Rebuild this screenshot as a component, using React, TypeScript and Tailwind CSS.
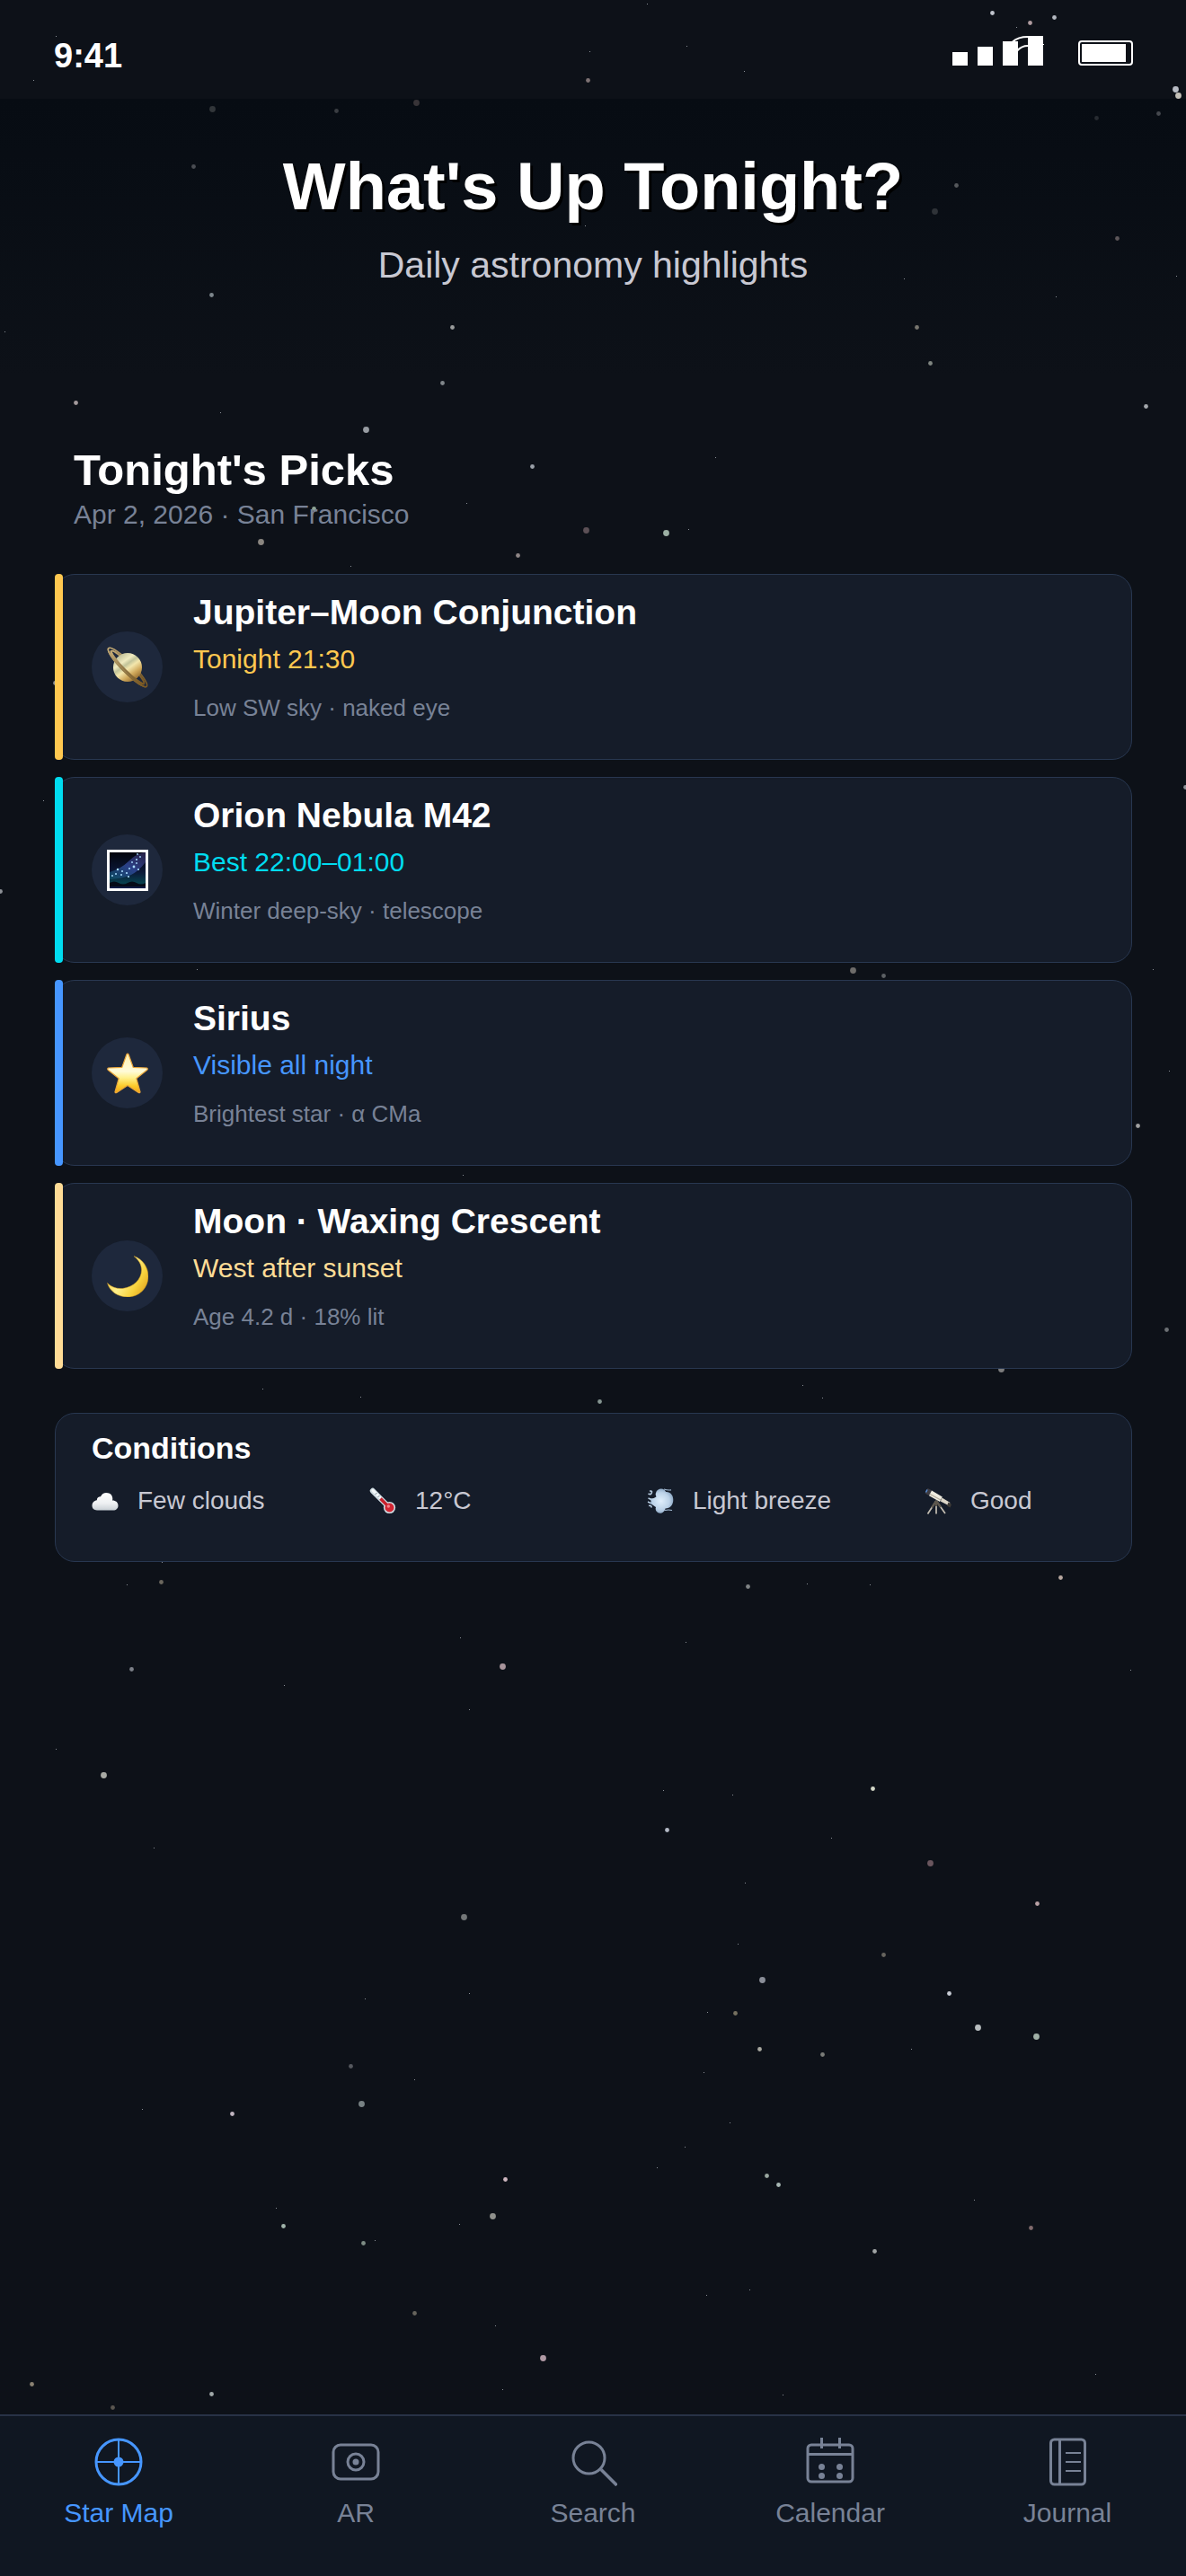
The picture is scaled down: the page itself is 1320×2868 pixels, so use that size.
import type { ReactNode } from "react";

type Star = [x: number, y: number, r: number, fill: string];

const BRIGHT_STARS: Star[] = [
  [1104, 14, 2, "#c0c4cc"], [1173, 19, 2, "#b4b8c0"], [1146, 25, 2, "#b09ca0"], [654, 89, 2, "#7e7274"],
  [1308, 99, 3, "#b8bcc4"], [1311, 106, 3, "#c4c0b8"], [236, 121, 3, "#32363a"], [374, 123, 2, "#3a3d42"],
  [463, 114, 3, "#383438"], [1289, 126, 2, "#45484e"], [1220, 131, 2, "#272b31"], [215, 185, 2, "#4a4d53"],
  [1064, 206, 2, "#55585c"], [1040, 235, 3, "#2f3338"], [1243, 265, 2, "#5c5659"], [235, 328, 2, "#7d868c"],
  [503, 364, 2, "#9a9c9c"], [1020, 364, 2, "#78766f"], [1035, 404, 2, "#7f8580"], [492, 426, 2, "#80868a"],
  [84, 448, 2, "#a39a9c"], [1275, 452, 2, "#a4a8ac"], [407, 478, 3, "#979ca2"], [592, 519, 2, "#9aa0a8"],
  [349, 566, 2, "#8fa496"], [652, 590, 3, "#5c5056"], [290, 603, 3, "#8a8680"], [576, 618, 2, "#8f8686"],
  [741, 593, 3, "#9cb0a4"], [61, 760, 2, "#8c9096"], [0, 992, 2, "#8c9096"], [1319, 876, 2, "#8c9096"],
  [949, 1080, 3, "#6e6c6a"], [983, 1086, 2, "#5c6064"], [1266, 1253, 2, "#a0a0a0"], [1298, 1480, 2, "#6c7074"],
  [1114, 1524, 3, "#7c7c7c"], [667, 1560, 2, "#849490"], [1180, 1756, 2, "#b8a8a0"], [179, 1761, 2, "#6b675e"],
  [832, 1766, 2, "#7f8385"], [559, 1855, 3, "#a8959c"], [146, 1858, 2, "#7c8088"], [115, 1976, 3, "#a8aaa4"],
  [971, 1991, 2, "#d4d8c8"], [742, 2037, 2, "#b4bac6"], [1035, 2074, 3, "#6a565e"], [1154, 2119, 2, "#b8a0a4"],
  [516, 2134, 3, "#737778"], [983, 2176, 2, "#66645e"], [848, 2204, 3, "#8a8e98"], [1056, 2219, 2, "#c8ccd4"],
  [818, 2241, 2, "#75705f"], [1088, 2257, 3, "#b8bec0"], [1153, 2267, 3, "#a0b0a6"], [845, 2281, 2, "#a8a8a0"],
  [915, 2287, 2, "#7a7c78"], [390, 2300, 2, "#55585e"], [402, 2342, 3, "#788284"], [258, 2353, 2, "#c0b4c0"],
  [562, 2426, 2, "#d0b8c0"], [853, 2422, 2, "#9aa8a0"], [866, 2432, 2, "#a8b8b4"], [548, 2467, 3, "#8f918c"],
  [315, 2478, 2, "#a0b4aa"], [1147, 2480, 2, "#806a6c"], [404, 2497, 2, "#7d8c84"], [973, 2506, 2, "#a0a4a4"],
  [461, 2575, 2, "#66645c"], [604, 2625, 3, "#b09aa4"], [35, 2654, 2, "#8a8272"], [235, 2665, 2, "#a0a8a8"],
  [125, 2680, 2, "#5a5650"],
];

const FAINT_STARS: [number, number][] = [
  [720, 4], [1131, 30], [62, 40], [764, 51], [656, 57], [828, 79], [37, 89], [651, 251], [1006, 310],
  [1309, 307], [1175, 330], [5, 369], [245, 459], [796, 509], [519, 560], [766, 589], [390, 630], [48, 891],
  [219, 1079], [515, 1308], [1301, 1192], [1283, 1079], [292, 1546], [401, 1555], [893, 1542], [915, 1556],
  [141, 1764], [180, 1739], [898, 1763], [968, 1764], [512, 1823], [763, 1828], [1258, 1859], [316, 1876],
  [522, 1903], [62, 1947], [738, 1993], [815, 1998], [925, 2046], [171, 2057], [829, 2096], [821, 2164],
  [406, 2225], [522, 2219], [787, 2240], [1014, 2281], [783, 2307], [461, 2315], [158, 2348], [812, 2363],
  [762, 2390], [731, 2413], [1084, 2449], [307, 2458], [511, 2476], [417, 2494], [834, 2549], [786, 2555],
  [551, 2589], [1219, 2643], [559, 2660], [871, 2666],
];

function StarField() {
  return (
    <svg
      aria-hidden="true"
      className="pointer-events-none absolute inset-0 h-full w-full"
      viewBox="0 0 1320 2868"
      preserveAspectRatio="xMidYMin slice"
    >
      {BRIGHT_STARS.map(([x, y, r, fill]) => (
        <circle key={`${x}-${y}`} cx={x + 0.5} cy={y + 0.5} r={r + 0.4} fill={fill} />
      ))}
      {FAINT_STARS.map(([x, y]) => (
        <rect key={`${x}-${y}`} x={x} y={y} width="1" height="1" fill="#8a8f96" />
      ))}
    </svg>
  );
}

function SignalAndBattery() {
  return (
    <svg width="201" height="33" viewBox="0 0 201 33" fill="none" role="img" aria-label="Signal and battery">
      <g fill="#fff">
        <rect x="0" y="18" width="17" height="15" />
        <rect x="28" y="12" width="17" height="21" />
        <rect x="56" y="6" width="17" height="27" />
        <rect x="84" y="0" width="17" height="33" />
        <rect x="101" y="9" width="1" height="1" />
        <rect x="144" y="9" width="49" height="20" />
      </g>
      <path d="M67 6.5Q73 1 84 1M72 16.500Q77 11 84 11" stroke="#fff" strokeWidth="2" />
      <rect x="141" y="6" width="59" height="26" rx="3" stroke="#fff" strokeWidth="2" />
    </svg>
  );
}

function PlanetIcon() {
  return (
    <svg width="46" height="46" viewBox="0 0 46 46" aria-hidden="true">
      <defs>
        <linearGradient id="planet" x1="0.2" y1="0.1" x2="0.8" y2="0.95">
          <stop offset="0" stopColor="#c3c19a" />
          <stop offset="0.25" stopColor="#f0ebc0" />
          <stop offset="0.38" stopColor="#c2c49a" />
          <stop offset="0.52" stopColor="#f3e6ac" />
          <stop offset="0.75" stopColor="#d0a95c" />
          <stop offset="1" stopColor="#8f672c" />
        </linearGradient>
        <linearGradient id="ring" x1="0" y1="0" x2="1" y2="0">
          <stop offset="0" stopColor="#c4ab76" />
          <stop offset="0.5" stopColor="#8e7443" />
          <stop offset="1" stopColor="#7a5822" />
        </linearGradient>
      </defs>
      <g transform="rotate(45 23 23)" fill="none" stroke="url(#ring)">
        <ellipse cx="23" cy="23" rx="30" ry="6" strokeWidth="1.600" />
        <ellipse cx="23" cy="23" rx="25.500" ry="4" strokeWidth="2" />
      </g>
      <circle cx="23" cy="23" r="16" fill="url(#planet)" />
      <g transform="rotate(45 23 23)" fill="none" stroke="url(#ring)">
        <path d="M-7 23A30 6 0 0 0 53 23" strokeWidth="1.600" />
        <path d="M-2.500 23A25.500 4 0 0 0 48.500 23" strokeWidth="2.400" />
      </g>
    </svg>
  );
}

function NebulaIcon() {
  return (
    <svg width="46" height="46" viewBox="0 0 46 46" aria-hidden="true">
      <defs>
        <linearGradient id="night" x1="0" y1="0" x2="0" y2="1">
          <stop offset="0" stopColor="#02040c" />
          <stop offset="0.55" stopColor="#0b1838" />
          <stop offset="0.85" stopColor="#07404e" />
          <stop offset="1" stopColor="#04101f" />
        </linearGradient>
        <linearGradient id="milky" x1="0" y1="1" x2="1" y2="0">
          <stop offset="0" stopColor="#12647c" stopOpacity="0.500" />
          <stop offset="0.5" stopColor="#3550a8" stopOpacity="0.750" />
          <stop offset="1" stopColor="#4a3a7a" stopOpacity="0.500" />
        </linearGradient>
      </defs>
      <rect x="0" y="0" width="46" height="46" fill="#fff" />
      <rect x="3" y="3" width="40" height="40" fill="url(#night)" />
      <path d="M3 25Q16 21 24 13T41 3H43V14Q35 24 27 28T3 33Z" fill="url(#milky)" />
      <path d="M3 37Q8 34 13 37T23 37T33 37T43 37V43H3Z" fill="#050b18" />
      <path d="M3 41H43V43H3Z" fill="#0c1b44" />
      <g fill="#a9dcff">
        <circle cx="12" cy="22" r="1.200" />
        <circle cx="17" cy="24" r="1" />
        <circle cx="22" cy="26" r="1.100" />
        <circle cx="25" cy="21" r="1" />
        <circle cx="30" cy="19" r="1.400" />
        <circle cx="35" cy="22" r="1.100" />
        <circle cx="28" cy="14" r="0.900" />
        <circle cx="33" cy="11" r="1" />
        <circle cx="37" cy="8" r="0.900" />
        <circle cx="34" cy="5" r="0.900" />
        <circle cx="10" cy="27" r="1" />
        <circle cx="16" cy="28" r="1" />
        <circle cx="24" cy="30" r="1.100" />
        <circle cx="6" cy="29" r="0.900" />
        <circle cx="33" cy="15" r="0.900" />
      </g>
    </svg>
  );
}

function StarIcon() {
  return (
    <svg width="46" height="46" viewBox="0 0 46 46" aria-hidden="true">
      <defs>
        <linearGradient id="gold" x1="0" y1="0" x2="0" y2="1">
          <stop offset="0" stopColor="#fff0b0" />
          <stop offset="0.45" stopColor="#fffbd8" />
          <stop offset="0.62" stopColor="#fff08a" />
          <stop offset="0.82" stopColor="#fccb2c" />
          <stop offset="1" stopColor="#f2a616" />
        </linearGradient>
      </defs>
      <path
        d="M22 1.800Q23 0.500 24 1.800L29.200 16.300L44.500 17Q46 18 44.700 19.300L32.800 28.700L37 43.600Q36.800 45.200 35.200 44.500L23 36.500L10.800 44.500Q9.200 45.200 9 43.600L13.200 28.700L1.300 19.300Q0 18 1.500 17L16.800 16.300Z"
        fill="url(#gold)"
        stroke="#e9a53a"
        strokeWidth="1.200"
        strokeLinejoin="round"
      />
    </svg>
  );
}

function MoonIcon() {
  return (
    <svg width="46" height="46" viewBox="0 0 46 46" aria-hidden="true">
      <defs>
        <linearGradient id="moon" x1="0" y1="0.2" x2="1" y2="0.8">
          <stop offset="0" stopColor="#f4c020" />
          <stop offset="0.45" stopColor="#fff08c" />
          <stop offset="0.75" stopColor="#f8d23c" />
          <stop offset="1" stopColor="#e0a420" />
        </linearGradient>
      </defs>
      <path
        d="M30 0.500C40 4 46 13 46 23C46 36 36 46 23 46C12 46 3 39.500 0.500 30.500C5 35 11 37 17.500 36.500C30 35 38.500 26 38.500 16C38.500 9.500 35 4.500 30 0.500Z"
        fill="url(#moon)"
        stroke="#d09a20"
        strokeWidth="0.500"
      />
    </svg>
  );
}

function CloudIcon() {
  return (
    <svg width="30" height="30" viewBox="0 0 30 30" aria-hidden="true">
      <defs>
        <linearGradient id="cloud" x1="0" y1="0" x2="0" y2="1">
          <stop offset="0" stopColor="#fff" />
          <stop offset="0.6" stopColor="#eef0f2" />
          <stop offset="1" stopColor="#c9d0d6" />
        </linearGradient>
      </defs>
      <path
        d="M6 25.500C2.500 25.500 0.500 23.300 0.500 20.300C0.500 17 2.800 14.600 5.800 14.200C5.800 11.500 7.500 10.200 10 10.200C11.200 7.500 13.500 6 16.500 6C20.500 6 23.300 8.800 23.300 12.500C23.300 13.500 23.200 14 23 14.600C27 14.600 29.500 17 29.500 20.200C29.500 23.400 27.300 25.500 24 25.500Z"
        fill="url(#cloud)"
      />
    </svg>
  );
}

function ThermometerIcon() {
  return (
    <svg width="30" height="30" viewBox="0 0 30 30" aria-hidden="true">
      <path d="M3.800 3.800L22 22" stroke="#cfdce2" strokeWidth="6" strokeLinecap="round" />
      <circle cx="22.500" cy="22.500" r="6.600" fill="#cfdce2" />
      <path d="M4 3.400L12 11.400" stroke="#f4f8fa" strokeWidth="3" strokeLinecap="round" />
      <path d="M12.500 12.500L22 22" stroke="#c8202c" strokeWidth="3.400" />
      <circle cx="22.500" cy="22.500" r="5" fill="#d22532" />
      <circle cx="21.300" cy="21" r="1.700" fill="#f58088" />
      <path d="M8.500 6L6.500 8M11.500 9L9.500 11" stroke="#7c8d96" />
    </svg>
  );
}

function WindIcon() {
  return (
    <svg width="30" height="30" viewBox="0 0 30 30" aria-hidden="true">
      <defs>
        <radialGradient id="wind">
          <stop offset="0" stopColor="#e0effc" />
          <stop offset="0.7" stopColor="#bcd2e8" />
          <stop offset="1" stopColor="#8faac6" />
        </radialGradient>
      </defs>
      <path
        d="M10 6C11 2 16 0.500 19 2.500C20 3 20.500 3.500 21 5C26 4.500 29.500 9 29.300 14C29.200 19.500 26 23.500 20.500 23.500C20 27.500 15.500 29.800 12.500 28.300C10 27 9 24.500 10 22C7 20.500 6.500 19 3 17.800C5 16.500 5.500 15 2 12.300C6 12.800 8 12 10.500 10.200C9.500 8.500 9.500 7.500 10 6Z"
        fill="url(#wind)"
      />
      <path d="M19 2Q23 3.500 27 2.800M20 25.500Q24 24.500 28 25.500" stroke="#a5bdd6" strokeWidth="1.200" fill="none" />
      <path d="M1.500 7Q5 9 5.500 5Q5 3.500 3 4.200M2 20.500Q5 19.500 5 22.500" stroke="#b6cbe0" strokeWidth="1.700" fill="none" />
      <path d="M1 16L4 17.500M1.500 12L5 13.500" stroke="#b6cbe0" strokeWidth="1.400" />
    </svg>
  );
}

function TelescopeIcon() {
  return (
    <svg width="30" height="30" viewBox="0 0 30 30" aria-hidden="true">
      <path d="M13 15L3.500 29.500M13 15V29.500M13 15L23 29" stroke="#c4beb2" strokeWidth="1.700" />
      <path d="M13 15L8 22.500M13 15V21M13 15L18 22" stroke="#5c564c" strokeWidth="2.200" />
      <path d="M3.500 1L0.500 6.500L5.500 9.500L8.500 3.500Z" fill="#3c3b42" />
      <path d="M3 2.500L1.500 5.500" stroke="#5a90d8" strokeWidth="1.600" />
      <path d="M8 3.500L5 9.300L17 16L19.800 10.600Z" fill="#efebdf" />
      <path d="M6 7.500L18 14" stroke="#b4ac9c" strokeWidth="1.400" />
      <path d="M19.500 11.500L17.800 15.500L26.500 20L28.500 17Z" fill="#dcd6c8" />
      <path d="M26.500 16.500L25 20.500L28.500 22.500L30 19Z" fill="#3d3a36" />
    </svg>
  );
}

interface Pick {
  title: string;
  when: string;
  detail: string;
  bar: string;
  text: string;
  icon: ReactNode;
}

const PICKS: Pick[] = [
  { title: "Jupiter–Moon Conjunction", when: "Tonight 21:30", detail: "Low SW sky · naked eye", bar: "bg-[#ffc850]", text: "text-[#ffc850]", icon: <PlanetIcon /> },
  { title: "Orion Nebula M42", when: "Best 22:00–01:00", detail: "Winter deep-sky · telescope", bar: "bg-[#00dcf0]", text: "text-[#00dcf0]", icon: <NebulaIcon /> },
  { title: "Sirius", when: "Visible all night", detail: "Brightest star · α CMa", bar: "bg-[#4696ff]", text: "text-[#4696ff]", icon: <StarIcon /> },
  { title: "Moon · Waxing Crescent", when: "West after sunset", detail: "Age 4.2 d · 18% lit", bar: "bg-[#ffdc96]", text: "text-[#ffdc96]", icon: <MoonIcon /> },
];

const CONDITIONS: { label: string; icon: ReactNode }[] = [
  { label: "Few clouds", icon: <CloudIcon /> },
  { label: "12°C", icon: <ThermometerIcon /> },
  { label: "Light breeze", icon: <WindIcon /> },
  { label: "Good", icon: <TelescopeIcon /> },
];

function PickCard({ pick }: { pick: Pick }) {
  return (
    <li className="relative flex items-center gap-[34px] rounded-[22px] border border-[#283750] bg-[#151c29] pr-5 pl-10">
      <span className={`absolute -inset-y-px -left-px w-[9px] rounded-[4px] ${pick.bar}`} />
      <span className="flex size-[79px] shrink-0 items-center justify-center rounded-full bg-[#1e283c]">
        {pick.icon}
      </span>
      <div className="pt-5 pb-[41px]">
        <h3 className="text-[39px] leading-[44px] font-bold text-white">{pick.title}</h3>
        <p className={`mt-3 text-[30px] leading-9 ${pick.text}`}>{pick.when}</p>
        <p className="mt-5 text-[26px] leading-8 text-[#788296]">{pick.detail}</p>
      </div>
    </li>
  );
}

const TABS: { label: string; active?: boolean; icon: ReactNode }[] = [
  {
    label: "Star Map",
    active: true,
    icon: (
      <>
        <circle cx="27" cy="27" r="25" strokeWidth="3" />
        <path d="M27 1V53M1 27H53" strokeWidth="2" />
        <circle cx="27" cy="27" r="5.500" fill="currentColor" stroke="none" />
      </>
    ),
  },
  {
    label: "AR",
    icon: (
      <>
        <rect x="2" y="8" width="50" height="38" rx="8" strokeWidth="3" />
        <circle cx="27" cy="27" r="9" strokeWidth="3" />
        <circle cx="27" cy="27" r="3.500" fill="currentColor" stroke="none" />
      </>
    ),
  },
  {
    label: "Search",
    icon: (
      <>
        <circle cx="22.500" cy="22.500" r="17.500" strokeWidth="3" />
        <path d="M36 35.500L53.500 53" strokeWidth="3.500" />
      </>
    ),
  },
  {
    label: "Calendar",
    icon: (
      <>
        <rect x="2" y="8" width="50" height="41" rx="4" strokeWidth="3" />
        <path d="M2 18.500H52M17.500 0V12M37.500 0V12" strokeWidth="3" />
        <g fill="currentColor" stroke="none">
          <circle cx="17.500" cy="32.500" r="3.500" />
          <circle cx="37.500" cy="32.500" r="3.500" />
          <circle cx="17.500" cy="42.500" r="3.500" />
          <circle cx="37.500" cy="42.500" r="3.500" />
        </g>
      </>
    ),
  },
  {
    label: "Journal",
    icon: (
      <>
        <rect x="8.500" y="2" width="38" height="50" rx="4" strokeWidth="3" />
        <path d="M18.500 2V52" strokeWidth="3" />
        <path d="M25 17H42M25 27H42M25 37H42" strokeWidth="2" />
      </>
    ),
  },
];

export default function App() {
  return (
    <div className="relative isolate flex min-h-screen flex-col bg-[#0d1118] font-['Liberation_Sans',Arial,sans-serif]">
      <div className="flex h-[110px] items-start justify-between pt-10 pr-[59px] pl-[60px]">
        <time className="text-[38px] leading-[44px] font-bold text-white">9:41</time>
        <SignalAndBattery />
      </div>

      <header className="bg-linear-to-b from-[#070c13] to-[#0d1118] pt-14 pb-[100px] text-center">
        <h1 className="text-[74px] leading-[84px] font-bold text-white [text-shadow:3px_3px_0_#000]">What's Up Tonight?</h1>
        <p className="mt-5 text-[41px] leading-[50px] text-[#c8c8d2]">Daily astronomy highlights</p>
      </header>

      <StarField />

      <main className="relative flex-1 pt-[75px] pr-[60px] pb-16 pl-[61px]">
        <div className="pl-[21px]">
          <h2 className="text-[49px] leading-[56px] font-bold text-white">Tonight's Picks</h2>
          <p className="mt-1 text-[30px] leading-9 text-[#788296]">Apr 2, 2026 · San Francisco</p>
        </div>
        <ul className="mt-12 flex flex-col gap-[19px]">
          {PICKS.map((pick) => (
            <PickCard key={pick.title} pick={pick} />
          ))}
        </ul>

        <section className="mt-[49px] rounded-[22px] border border-[#283750] bg-[#151c29] pt-[18px] pr-6 pb-[50px] pl-10">
          <h2 className="text-[34px] leading-10 font-bold text-white">Conditions</h2>
          <ul className="mt-[22px] grid grid-cols-[3fr_3fr_3fr_2fr]">
            {CONDITIONS.map(({ label, icon }) => (
              <li key={label} className="flex items-center gap-[21px] text-[28px] leading-[34px] text-[#c8c8d2]">
                {icon}
                {label}
              </li>
            ))}
          </ul>
        </section>
      </main>

      <nav className="relative grid grid-cols-5 border-t-2 border-[#283246] bg-[#101722] pt-6 pb-[52px]">
        {TABS.map(({ label, active, icon }) => (
          <button
            key={label}
            type="button"
            aria-current={active ? "page" : undefined}
            className={`flex flex-col items-center gap-3 text-[30px] leading-9 ${active ? "text-[#4696ff]" : "text-[#788296]"}`}
          >
            <svg width="54" height="54" viewBox="0 0 54 54" fill="none" stroke="currentColor" aria-hidden="true">
              {icon}
            </svg>
            {label}
          </button>
        ))}
      </nav>
    </div>
  );
}
